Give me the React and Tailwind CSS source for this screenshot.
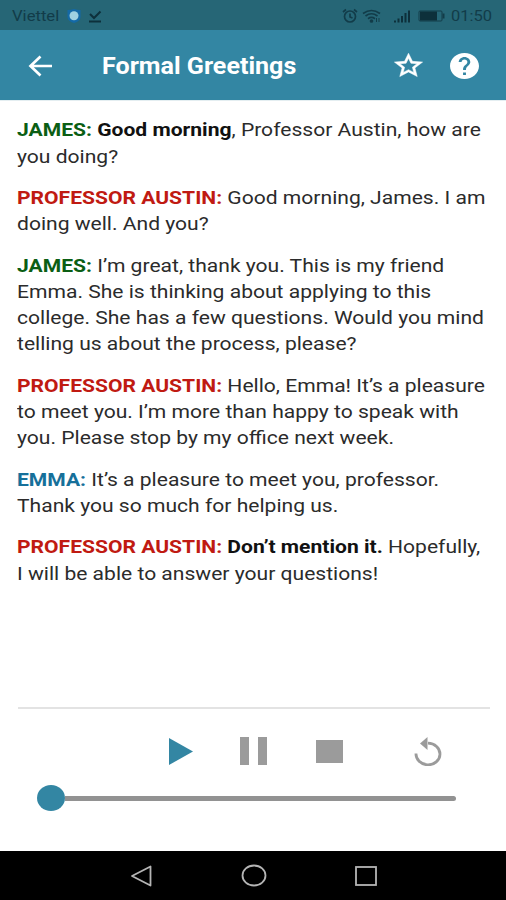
import React from "react";

const dialogue = [
    { name: "JAMES", color: "text-[#0b5e14]", lines: [[["Good morning", true], [", Professor Austin, how are"]], [["you doing?"]]] },
    { name: "PROFESSOR AUSTIN", color: "text-[#c01a12]", lines: [[["Good morning, James. I am"]], [["doing well. And you?"]]] },
    {
        name: "JAMES",
        color: "text-[#0b5e14]",
        lines: [
            [["I’m great, thank you. This is my friend"]],
            [["Emma. She is thinking about applying to this"]],
            [["college. She has a few questions. Would you mind"]],
            [["telling us about the process, please?"]]
        ]
    },
    {
        name: "PROFESSOR AUSTIN",
        color: "text-[#c01a12]",
        lines: [
            [["Hello, Emma! It’s a pleasure"]],
            [["to meet you. I’m more than happy to speak with"]],
            [["you. Please stop by my office next week."]]
        ]
    },
    { name: "EMMA", color: "text-[#16709a]", lines: [[["It’s a pleasure to meet you, professor."]], [["Thank you so much for helping us."]]] },
    { name: "PROFESSOR AUSTIN", color: "text-[#c01a12]", lines: [[["Don’t mention it.", true], [" Hopefully,"]], [["I will be able to answer your questions!"]]] }
];

const StatusBar = () => (
    <div className="flex h-[30px] items-center bg-[#266676] pl-3 pr-[13px] pt-[2px] text-[#123c49]">
        <span className="w-[48px] origin-left scale-x-[1.11] text-[15px] leading-none">Viettel</span>
        <svg className="ml-[6px] h-4 w-4" viewBox="0 0 16 16">
            <path d="M1.500 2Q5 2 8 1q3 1 6.500 1v7q0 4-6.500 6Q1.500 13 1.500 9z" fill="#1469a6" />
            <circle cx="8" cy="7.700" r="4.500" fill="#9fd0e2" />
        </svg>
        <svg className="ml-[6px] h-4 w-[14px]" viewBox="0 0 14 16" fill="none" stroke="#0d303b" strokeWidth="2">
            <path d="M2 6l4 4 6.500-6.500M1 13.500h12" />
        </svg>
        <div className="ml-auto flex items-center">
            <svg className="h-4 w-4" viewBox="0 0 16 16" fill="none" stroke="currentColor" strokeWidth="1.700">
                <circle cx="8" cy="8.500" r="5.500" />
                <path d="M8 5.500v3.500l2.500 1M1 4l3-2.500M15 4l-3-2.500" />
            </svg>
            <svg className="ml-1 h-4 w-[19px]" viewBox="0 0 19 16" fill="none" stroke="currentColor" strokeWidth="1.700">
                <path d="M1 5.500q8.500-6 17 0M3.500 8q6-4.500 12 0M6 10.700q3.500-2.500 7 0" />
                <circle cx="9.500" cy="13" r="1" fill="currentColor" />
                <path d="M14.500 10v4M17 10v4" strokeWidth="1" />
            </svg>
            <svg className="ml-3 h-4 w-[18px]" viewBox="0 0 18 16" fill="#0d303b">
                <path d="M1 12.500h2v2H1zM4.500 10.500h2v4h-2zM8 8h2v6.500H8zM11.500 5h2v9.500h-2zM15 2.500h2v12h-2z" />
            </svg>
            <svg className="ml-[7px] h-4 w-[28px]" viewBox="0 0 28 16">
                <rect x="1" y="3" width="23" height="10" rx="1" fill="none" stroke="currentColor" />
                <rect x="2" y="3.500" width="17" height="9" fill="#0d303b" />
                <path d="M25.500 5.500v5" stroke="currentColor" strokeWidth="2" />
            </svg>
            <span className="ml-[5px] w-[42px] text-[15px] leading-none">
                <span className="inline-block origin-left scale-x-[1.1]">01:50</span>
            </span>
        </div>
    </div>
);

const Header = () => (
    <header className="flex h-[70px] items-center bg-[#3386a3] pt-px text-white">
        <button className="ml-7 h-6 w-6" aria-label="Back">
            <svg className="h-6 w-6" viewBox="0 0 24 24" fill="none" stroke="currentColor" strokeWidth="2.700">
                <path d="M24 12H3M12.500 2.500L2.500 12l10 9.500" />
            </svg>
        </button>
        <h1 className="ml-[50px] origin-left scale-x-[1.09] whitespace-nowrap pt-[2px] text-[23px] font-bold leading-none">Formal Greetings</h1>
        <div className="ml-auto mr-[27px] flex items-center">
            <button aria-label="Favorite">
                <svg className="block h-[27px] w-[31px]" viewBox="1 1 22 22" preserveAspectRatio="none" fill="currentColor" stroke="currentColor" strokeWidth="0.400">
                    <path d="M22 9.240l-7.190-.62L12 2 9.190 8.630 2 9.240l5.460 4.730L5.820 21 12 17.270 18.180 21l-1.630-7.030L22 9.240zM12 15.400l-3.760 2.270 1-4.280-3.320-2.880 4.380-.38L12 6.100l1.710 4.040 4.380.38-3.320 2.880 1 4.280L12 15.400z" />
                </svg>
            </button>
            <button className="ml-[26px]" aria-label="Help">
                <svg className="block h-[26px] w-[29px]" viewBox="2 2 20 20" preserveAspectRatio="none" fill="currentColor">
                    <path d="M12 2C6.480 2 2 6.480 2 12s4.480 10 10 10 10-4.480 10-10S17.520 2 12 2zm1 17h-2v-2h2v2zm2.070-7.750l-.9.920C13.450 12.900 13 13.500 13 15h-2v-.5c0-1.100.450-2.100 1.170-2.830l1.240-1.260c.370-.36.590-.86.590-1.410 0-1.100-.9-2-2-2s-2 .9-2 2H8c0-2.210 1.790-4 4-4s4 1.790 4 4c0 .880-.36 1.680-.93 2.250z" />
                </svg>
            </button>
        </div>
    </header>
);

const Player = () => (
    <div className="ml-[18px] mr-4 h-[144px] border-t-2 border-[#e3e3e3]">
        <div className="flex h-[84px] items-center text-[#9b9b9b]">
            <button className="ml-[151px]" aria-label="Play">
                <svg className="block h-[27px] w-[24px] text-[#3386a3]" viewBox="0 0 24 27" fill="currentColor">
                    <path d="M0 0l24 13.500L0 27z" />
                </svg>
            </button>
            <button className="ml-[47px] flex h-[28px] gap-[9px]" aria-label="Pause">
                <span className="h-full w-[9px] bg-[#9b9b9b]" />
                <span className="h-full w-[9px] bg-[#9b9b9b]" />
            </button>
            <button className="ml-[49px] h-[23px] w-[27px] bg-[#9b9b9b]" aria-label="Stop" />
            <button className="ml-[71px]" aria-label="Replay">
                <svg className="block h-[29px] w-[28px]" viewBox="0 0 28 29">
                    <path d="M2 16.500A12 10.800 0 1 0 14 6.200" fill="none" stroke="currentColor" strokeWidth="2.800" />
                    <path d="M13.500 0v13L6 6.500z" fill="currentColor" />
                </svg>
            </button>
        </div>
        <div className="-mt-2 ml-[19px] flex h-[26px] w-[419px] items-center">
            <span className="h-[26px] w-[28px] rounded-[50%] bg-[#3386a3]" />
            <span className="h-[5px] flex-1 rounded-r-full bg-[#929292]" />
        </div>
    </div>
);

const App = () => (
    <div className="flex h-[900px] w-[506px] flex-col overflow-hidden bg-white font-['Roboto',sans-serif]">
        <StatusBar />
        <Header />
        <main className="flex-1 border-t border-[#e4eef1] pl-[17px] pt-[16.300px]">
            <div className="flex w-[410px] origin-left scale-x-[1.139] flex-col gap-[15.300px] text-[18.500px] leading-[26.200px] text-[#2b2b2b]">
                {dialogue.map((turn, i) => (
                    <p key={i} className="whitespace-nowrap">
                        {turn.lines.map((line, j) => (
                            <span key={j} className="block">
                                {j === 0 && <span className={`font-bold ${turn.color}`}>{turn.name}: </span>}
                                {line.map(([text, bold], k) => (
                                    <span key={k} className={bold ? "font-bold text-[#111111]" : ""}>{text}</span>
                                ))}
                            </span>
                        ))}
                    </p>
                ))}
            </div>
        </main>
        <Player />
        <nav className="flex h-[49px] items-center bg-black">
            <svg className="ml-[130px] h-[22px] w-[22px]" viewBox="0 0 22 22" fill="none" stroke="#b5b5b5" strokeWidth="1.800">
                <path d="M20.500 1.500v19L2 11z" strokeLinejoin="round" />
            </svg>
            <svg className="ml-[89px] h-[23px] w-[26px]" viewBox="0 0 26 23" fill="none" stroke="#b5b5b5" strokeWidth="1.800">
                <ellipse cx="13" cy="11.500" rx="11.500" ry="10" />
            </svg>
            <svg className="ml-[88px] h-[20px] w-[22px]" viewBox="0 0 22 20" fill="none" stroke="#b5b5b5" strokeWidth="1.800">
                <rect x="1" y="1" width="20" height="18" />
            </svg>
        </nav>
    </div>
);

export default App;
